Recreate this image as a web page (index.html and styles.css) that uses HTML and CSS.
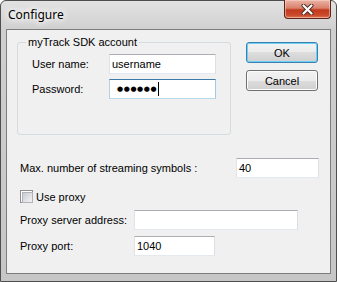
FILE: index.html
```html
<html lang="en"><head>
    <meta charset="UTF-8">
    <title>Configure</title>
    <link rel="stylesheet" href="styles.css">
  </head>
  <body>
    <div class="window">
      <div class="titlebar">
        <span class="title">Configure</span>
        <div class="close">
          <svg width="13" height="11" viewBox="0 0 13 11">
            <path d="M2.5 1.5 L10.5 9.5 M10.5 1.5 L2.5 9.5" stroke="#4a2a25" stroke-width="4" stroke-linecap="round"/>
            <path d="M2.5 1.5 L10.5 9.5 M10.5 1.5 L2.5 9.5" stroke="#ffffff" stroke-width="2.2" stroke-linecap="round"/>
          </svg>
        </div>
      </div>
      <div class="client">
        <div class="top">
          <fieldset class="group">
            <legend>myTrack SDK account</legend>
            <div class="field">
              <label>User name:</label>
              <div class="textbox user">username</div>
            </div>
            <div class="field">
              <label>Password:</label>
              <div class="textbox user focus"><span class="dots">●●●●●●</span><span class="caret"></span></div>
            </div>
          </fieldset>
          <div class="buttons">
            <div class="btn default">OK</div>
            <div class="btn">Cancel</div>
          </div>
        </div>
        <div class="lower">
          <div class="row symbols">
            <label class="wide">Max. number of streaming symbols :</label>
            <div class="textbox num">40</div>
          </div>
          <div class="checkrow">
            <span class="check"></span>
            <span>Use proxy</span>
          </div>
          <div class="row address">
            <label class="mid">Proxy server address:</label>
            <div class="textbox addr"></div>
          </div>
          <div class="row port">
            <label class="mid">Proxy port:</label>
            <div class="textbox portbox">1040</div>
          </div>
        </div>
      </div>
    </div>
  </body>
</html>
```

FILE: styles.css
```css
* {
    box-sizing: border-box;
}
body {
    margin: 0;
    font-family: "Liberation Sans", Arial, sans-serif;
    font-size: 11px;
    color: #000;
}
.window {
    width: 337px;
    height: 282px;
    border: 1px solid #4e4e4e;
    border-radius: 6px 6px 0 0;
    background: linear-gradient(#e2e2e2, #cfcfcf 30px, #c6c6c6);
    padding: 0 5px 7px 5px;
    display: flex;
    flex-direction: column;
}
.titlebar {
    height: 28px;
    display: flex;
    align-items: flex-start;
}
.title {
    font-family: "Noto Sans", sans-serif;
    font-size: 12px;
    line-height: 16px;
    margin: 6px 0 0 2px;
    padding: 0 4px 0 0;
    text-shadow: 0 0 6px #fff, 0 0 8px #fff, 0 0 10px #fff;
}
.close {
    margin: -1px 0 0 auto;
    width: 47px;
    height: 19px;
    border: 1px solid #5a2418;
    border-top: none;
    border-radius: 0 0 4px 4px;
    background: linear-gradient(#eab3a6, #d9816b 45%, #c2391d 55%, #cc4a2c 85%, #e07a55);
    box-shadow: inset 0 0 0 1px rgba(255, 220, 210, 0.5);
    display: flex;
    justify-content: center;
    align-items: center;
}
.client {
    flex: 1;
    border: 1px solid #7d7d7d;
    background: #f0f0f0;
}
.top {
    display: flex;
    align-items: flex-start;
    padding-left: 10px;
    margin-top: 6px;
}
.group {
    width: 214px;
    height: 99px;
    margin: 0;
    padding: 0 0 0 8px;
    border: 1px solid #d5dcdf;
    border-radius: 3px;
}
.group legend {
    padding: 0 2px;
    line-height: 13px;
}
.field {
    display: flex;
    align-items: center;
    margin: 5px 0 0 6px;
}
.field label {
    width: 77px;
}
.textbox {
    height: 20px;
    background: #fff;
    border: 1px solid;
    border-color: #abadb3 #dbdfe6 #e3e9ef #e2e3ea;
    padding: 0 2px;
    display: flex;
    align-items: center;
}
.textbox.focus {
    border-color: #3d7bad #a4c9e3 #b7d9ed #b5cfe7;
}
.user {
    width: 107px;
}
.dots {
    font-family: "DejaVu Sans", sans-serif;
    font-size: 7px;
    letter-spacing: 0.6px;
    margin-left: 5px;
}
.caret {
    width: 1px;
    height: 14px;
    background: #000;
    margin-left: 1px;
}
.buttons {
    margin: 6px 0 0 15px;
    display: flex;
    flex-direction: column;
    gap: 7px;
}
.btn {
    width: 72px;
    height: 21px;
    border: 1px solid #707070;
    border-radius: 3px;
    background: linear-gradient(#f2f2f2, #ebebeb 50%, #dddddd 50%, #cfcfcf);
    box-shadow: inset 0 0 0 1px #fcfcfc;
    display: flex;
    justify-content: center;
    align-items: center;
}
.btn.default {
    border-color: #3c7fb1;
    box-shadow: inset 0 0 0 1px #6cd0f5;
}
.lower {
    padding-left: 13px;
}
.row {
    display: flex;
    align-items: center;
}
.symbols {
    margin-top: 23px;
}
.wide {
    width: 216px;
}
.mid {
    width: 114px;
}
.num {
    width: 83px;
}
.addr {
    width: 164px;
}
.portbox {
    width: 81px;
}
.checkrow {
    display: flex;
    align-items: center;
    gap: 3px;
    height: 13px;
    margin-top: 12px;
}
.check {
    width: 13px;
    height: 13px;
    border: 1px solid #8e8f8f;
    background: #fff;
    padding: 1px;
}
.check::before {
    content: "";
    display: block;
    width: 9px;
    height: 9px;
    border: 1px solid #b1b4b8;
    background: linear-gradient(135deg, #c9cdd2, #f3f3f3);
}
.address {
    margin-top: 7px;
}
.port {
    margin-top: 6px;
}
```
